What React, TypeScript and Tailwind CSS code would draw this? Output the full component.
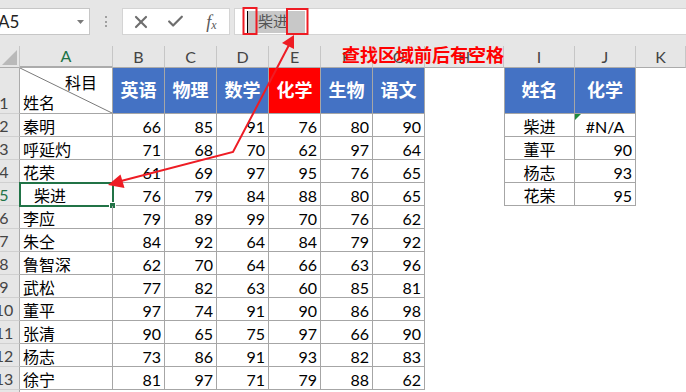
import React from 'react';
import { X, Check } from 'lucide-react';

type Row = [string, number, number, number, number, number, number];

const scores: Row[] = [
  ['秦明', 66, 85, 91, 76, 80, 90],
  ['呼延灼', 71, 68, 70, 62, 97, 64],
  ['花荣', 61, 69, 97, 95, 76, 65],
  ['柴进', 76, 79, 84, 88, 80, 65],
  ['李应', 79, 89, 99, 70, 76, 62],
  ['朱仝', 84, 92, 64, 84, 79, 92],
  ['鲁智深', 62, 70, 64, 66, 63, 96],
  ['武松', 77, 82, 63, 60, 85, 81],
  ['董平', 97, 74, 91, 90, 86, 98],
  ['张清', 90, 65, 75, 97, 66, 90],
  ['杨志', 73, 86, 91, 93, 82, 83],
  ['徐宁', 81, 97, 71, 79, 88, 62],
];

const subjects = ['英语', '物理', '数学', '化学', '生物', '语文'];

const lookup: [string, string | number][] = [
  ['柴进', '#N/A'],
  ['董平', 90],
  ['杨志', 93],
  ['花荣', 95],
];

const letters = ['A', 'B', 'C', 'D', 'E', 'F', 'G', 'H', 'I', 'J', 'K'];

const colHead = 'flex items-center justify-center border-r border-b border-r-[#c6c6c6] border-b-[#ababab] bg-[#e6e6e6] text-[16px] text-[#444]';
const rowHead = 'flex items-end overflow-hidden border-r border-b border-r-[#ababab] border-b-[#d0d0d0] bg-[#e6e6e6] text-[16px] text-[#444]';
const cell = 'flex items-end border-r border-b border-[#a6a6a6] pb-[1px] leading-none';
const blue = 'flex items-center justify-center border-r border-b border-[#a6a6a6] bg-[#4472c4] text-[18px] font-bold text-white';

function RowNum({ n, active }: { n: number; active?: boolean }) {
  return (
    <div className={`${rowHead} ${active ? 'bg-[#d3d3d3] text-[#217346]' : ''}`}>
      <span className="-ml-[12px] w-[32px] shrink-0 pb-[2px] text-center leading-none">{n}</span>
    </div>
  );
}

function FormulaBar() {
  return (
    <div className="flex h-[46px] items-start bg-[#e6e6e6] pt-[8px]">
      <div className="relative flex h-[27px] w-[90px] items-center border border-l-0 border-[#c6c6c6] bg-white">
        <span className="-ml-[2px] text-[17px] text-[#222]">A5</span>
        <svg className="absolute left-[77px] top-[11px]" width="7" height="4" viewBox="0 0 7 4">
          <path d="M0 0h7L3.5 4z" fill="#7a7a7a" />
        </svg>
      </div>
      <div className="flex w-[32px] flex-col items-center gap-[2.5px] pt-[8px]">
        <span className="h-[2px] w-[2px] bg-[#a0a0a0]" />
        <span className="h-[2px] w-[2px] bg-[#a0a0a0]" />
        <span className="h-[2px] w-[2px] bg-[#a0a0a0]" />
      </div>
      <div className="flex h-[27px] w-[108px] items-center border border-[#d4d4d4] bg-white text-[#6e6e6e]">
        <div className="flex w-[36px] justify-center">
          <X size={20} strokeWidth={2.6} />
        </div>
        <div className="flex w-[36px] justify-center">
          <Check size={19} strokeWidth={2.8} />
        </div>
        <div className="flex w-[36px] items-end justify-center font-[family-name:'Liberation_Serif',serif] italic leading-none text-[#5a5a5a]">
          <span className="text-[18px]">f</span>
          <span className="text-[12px]">x</span>
        </div>
      </div>
      <div className="ml-[4px] flex h-[27px] flex-1 items-center border border-r-0 border-[#d4d4d4] bg-white">
        <span className="ml-[12px] h-[22px] w-px bg-black" />
        <span className="flex h-[22px] items-center bg-[#c8c8c8] pl-[10px] pr-[17px] text-[15px] text-[#555]">柴进</span>
      </div>
    </div>
  );
}

function Sheet() {
  return (
    <div className="grid grid-cols-[20px_93px_52px_52px_52px_52px_52px_52px_79px_71px_61px_50px] grid-rows-[22px_46px_repeat(13,23px)]">
      {/* column headers */}
      <div className="relative border-r border-b border-r-[#c6c6c6] border-b-[#ababab] bg-[#e6e6e6]">
        <svg className="absolute left-0 top-0" width="20" height="22" viewBox="0 0 20 22">
          <path d="M17 4V19H2z" fill="#b9b9b9" />
        </svg>
      </div>
      {letters.map((l) => (
        <div
          key={l}
          className={l === 'A' ? `${colHead} border-b-2 border-b-[#217346] bg-[#d3d3d3] text-[#217346]` : colHead}
        >
          {l}
        </div>
      ))}

      {/* row 1 */}
      <RowNum n={1} />
      <div className="relative flex flex-col justify-between border-r border-b border-[#a6a6a6] leading-none">
        <svg className="absolute inset-0 h-full w-full">
          <line x1="0" y1="0" x2="100%" y2="100%" stroke="#7a7a7a" strokeWidth="1" />
        </svg>
        <span className="mr-[15px] mt-[7px] self-end">科目</span>
        <span className="mb-[2px] ml-[3px] self-start">姓名</span>
      </div>
      {subjects.map((s) => (
        <div key={s} className={s === '化学' ? `${blue} bg-[#ff0000]` : blue}>
          {s}
        </div>
      ))}
      <div />
      <div className={`${blue} border-l`}>姓名</div>
      <div className={blue}>化学</div>
      <div />

      {/* data rows */}
      {Array.from({ length: 13 }).map((_, i) => {
        const r = scores[i];
        const lk = lookup[i];
        const rowNo = i + 2;
        if (!r) {
          return (
            <React.Fragment key={rowNo}>
              <RowNum n={rowNo} />
              <div className="col-span-11" />
            </React.Fragment>
          );
        }
        const sel = rowNo === 5;
        return (
          <React.Fragment key={rowNo}>
            <RowNum n={rowNo} active={sel} />
            <div className={`${cell} relative ${sel ? 'pl-[14px]' : 'pl-[3px]'}`}>
              {r[0]}
              {sel && (
                <>
                  <span className="absolute -left-px -top-px h-[25px] w-[95px] border-2 border-[#217346]" />
                  <span className="absolute -bottom-[4px] -right-[4px] h-[7px] w-[7px] border border-white bg-[#217346]" />
                </>
              )}
            </div>
            {r.slice(1).map((v, j) => (
              <div key={j} className={`${cell} justify-end pr-[3px]`}>
                {v}
              </div>
            ))}
            <div />
            {lk ? (
              <>
                <div className={`${cell} justify-center border-l`}>{lk[0]}</div>
                {typeof lk[1] === 'string' ? (
                  <div className={`${cell} relative justify-center`}>
                    <svg className="absolute left-0 top-0" width="6" height="6" viewBox="0 0 6 6">
                      <path d="M0 0h6L0 6z" fill="#1e8a3c" />
                    </svg>
                    {lk[1]}
                  </div>
                ) : (
                  <div className={`${cell} justify-end pr-[3px]`}>{lk[1]}</div>
                )}
              </>
            ) : (
              <>
                <div />
                <div />
              </>
            )}
            <div />
          </React.Fragment>
        );
      })}
    </div>
  );
}

function Callouts() {
  const red = '#ee1c24';
  return (
    <>
      <svg className="pointer-events-none absolute inset-0 z-10" width="686" height="392" viewBox="0 0 686 392">
        <rect x="243.5" y="8" width="13" height="26" fill="none" stroke={red} strokeWidth="2" />
        <rect x="287" y="9" width="20.5" height="25" fill="none" stroke={red} strokeWidth="2" />
        <polyline points="289,45 233,152 121,181" fill="none" stroke={red} strokeWidth="2" />
        <polygon points="294,35 294,49 282,43" fill={red} />
        <polygon points="108,185 124.5,188 120.5,174.5" fill={red} />
      </svg>
      <div className="absolute left-[342px] top-[45px] z-10 font-[family-name:'Noto_Sans_CJK_SC',sans-serif] text-[18px] font-bold leading-none text-[#ff0000]">
        查找区域前后有空格
      </div>
    </>
  );
}

export default function App() {
  return (
    <div className="relative h-[392px] w-[686px] overflow-hidden bg-white font-[family-name:Lato,'Noto_Sans_CJK_SC',sans-serif] text-[16px] text-black">
      <FormulaBar />
      <Sheet />
      <Callouts />
    </div>
  );
}
